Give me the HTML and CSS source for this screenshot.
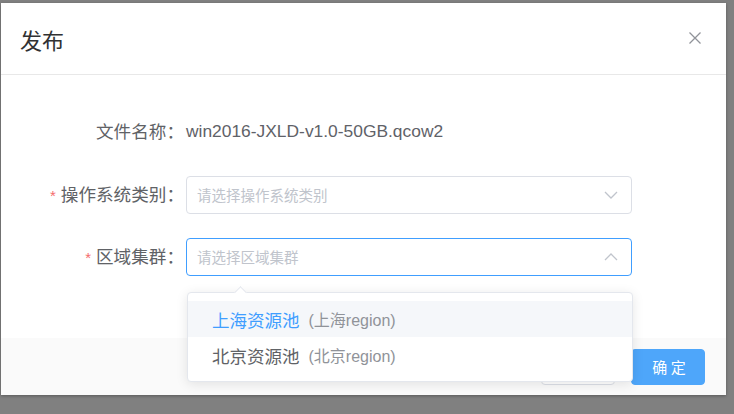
FILE: index.html
```html
<!DOCTYPE html>
<html lang="zh-CN">
<head>
<meta charset="utf-8">
<title>发布</title>
<link rel="stylesheet" href="styles.css">
</head>
<body>
<div class="overlay">
  <div class="dialog">
    <div class="header">
      <span class="title">发布</span>
      <svg class="close" width="12" height="12" viewBox="0 0 12 12"><path d="M0.5 0.5 L11.5 11.5 M11.5 0.5 L0.5 11.5" stroke="#909399" stroke-width="1.3" fill="none"/></svg>
    </div>
    <div class="body">
      <div class="row row-first">
        <label class="label">文件名称：</label>
        <div class="value">win2016-JXLD-v1.0-50GB.qcow2</div>
      </div>
      <div class="row row-second">
        <label class="label"><span class="req">*</span>操作系统类别：</label>
        <div class="select">
          <span class="placeholder">请选择操作系统类别</span>
          <svg class="chev" width="14" height="8" viewBox="0 0 14 8"><polyline points="1,1 7,7 13,1" stroke="#c0c4cc" stroke-width="1.3" fill="none"/></svg>
        </div>
      </div>
      <div class="row">
        <label class="label"><span class="req">*</span>区域集群：</label>
        <div class="select focus">
          <span class="placeholder">请选择区域集群</span>
          <svg class="chev" width="14" height="8" viewBox="0 0 14 8"><polyline points="1,7 7,1 13,7" stroke="#c0c4cc" stroke-width="1.3" fill="none"/></svg>
        </div>
      </div>
    </div>
    <div class="footer">
      <button class="btn btn-cancel">取 消</button>
      <button class="btn btn-primary">确 定</button>
    </div>
    <div class="dropdown">
      <div class="caret"></div>
      <div class="item active">上海资源池<span class="sub">(上海region)</span></div>
      <div class="item">北京资源池<span class="sub">(北京region)</span></div>
    </div>
  </div>
</div>
</body>
</html>
```

FILE: styles.css
```css
html, body {
  margin: 0;
  padding: 0;
  width: 734px;
  height: 414px;
  overflow: hidden;
}
body {
  background: #808080;
  font-family: "Liberation Sans", "Noto Sans CJK SC", sans-serif;
}
.overlay {
  padding: 3px 0 0 1px;
}
.dialog {
  position: relative;
  width: 725px;
  height: 392px;
  background: #fff;
  display: flex;
  flex-direction: column;
  box-shadow: 0 1px 3px rgba(0, 0, 0, 0.3);
}
.header {
  height: 71px;
  border-bottom: 1px solid #e8e8e8;
  display: flex;
  align-items: center;
  justify-content: space-between;
  padding: 0 25px 0 19px;
}
.title {
  font-size: 22px;
  line-height: 30px;
  color: #303133;
  font-family: "Noto Sans CJK SC", sans-serif;
}
.close {
  display: block;
  margin-top: -2px;
}
.body {
  flex: 1;
  padding-top: 37px;
}
.row {
  display: flex;
  align-items: center;
  height: 38px;
  margin-bottom: 24px;
}
.row-first {
  margin-bottom: 26px;
}
.label {
  box-sizing: border-box;
  width: 185px;
  padding-right: 2px;
  text-align: right;
  font-size: 17.6px;
  line-height: 24px;
  color: #606266;
  font-family: "Noto Sans CJK SC", sans-serif;
  flex-shrink: 0;
}
.req {
  color: #f56c6c;
  margin-right: 5px;
  font-family: "Liberation Sans", sans-serif;
  font-size: 15px;
}
.value {
  font-size: 17.4px;
  color: #5f6268;
  line-height: 24px;
}
.select {
  box-sizing: border-box;
  width: 446px;
  height: 38px;
  border: 1px solid #dcdfe6;
  border-radius: 4px;
  display: flex;
  align-items: center;
  justify-content: space-between;
  padding: 0 13px 0 10px;
}
.select.focus {
  border-color: #409eff;
}
.placeholder {
  font-size: 14.5px;
  color: #c0c4cc;
  font-family: "Noto Sans CJK SC", sans-serif;
  line-height: 20px;
}
.chev {
  display: block;
}
.footer {
  height: 57px;
  background: #fafafa;
  display: flex;
  align-items: center;
  justify-content: flex-end;
  padding-right: 21px;
}
.btn {
  box-sizing: border-box;
  width: 74px;
  height: 36px;
  border-radius: 4px;
  font-size: 15px;
  font-family: "Noto Sans CJK SC", sans-serif;
  cursor: pointer;
  padding: 0 0 0 2px;
}
.btn-cancel {
  background: #fff;
  border: 1px solid #dcdfe6;
  color: #606266;
  margin-right: 16px;
}
.btn-primary {
  background: #4ea6fa;
  border: 1px solid #4ea6fa;
  color: #fff;
}
.dropdown {
  position: absolute;
  left: 186px;
  top: 289px;
  width: 446px;
  box-sizing: border-box;
  background: #fff;
  border: 1px solid #e4e7ed;
  border-radius: 4px;
  box-shadow: 0 2px 12px rgba(0, 0, 0, 0.1);
  padding: 8px 0;
  z-index: 10;
}
.caret {
  position: absolute;
  top: -5px;
  left: 48px;
  width: 8px;
  height: 8px;
  background: #fff;
  border-top: 1px solid #e4e7ed;
  border-left: 1px solid #e4e7ed;
  transform: rotate(45deg);
}
.item {
  height: 36px;
  display: flex;
  align-items: center;
  padding-left: 24px;
  font-size: 17.5px;
  color: #606266;
  font-family: "Noto Sans CJK SC", sans-serif;
}
.item.active {
  background: #f5f7fa;
  color: #409eff;
}
.sub {
  font-size: 16px;
  color: #909399;
  margin-left: 9px;
  font-family: "Liberation Sans", "Noto Sans CJK SC", sans-serif;
}
```
